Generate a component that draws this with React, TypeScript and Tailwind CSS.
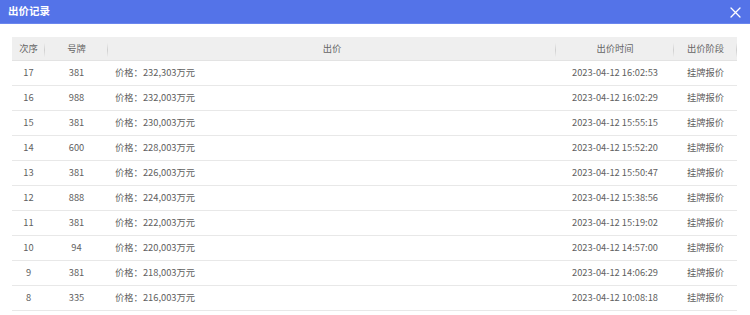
import React from "react";

const rows = [
  ["17", "381", "232,303", "2023-04-12 16:02:53"],
  ["16", "988", "232,003", "2023-04-12 16:02:29"],
  ["15", "381", "230,003", "2023-04-12 15:55:15"],
  ["14", "600", "228,003", "2023-04-12 15:52:20"],
  ["13", "381", "226,003", "2023-04-12 15:50:47"],
  ["12", "888", "224,003", "2023-04-12 15:38:56"],
  ["11", "381", "222,003", "2023-04-12 15:19:02"],
  ["10", "94", "220,003", "2023-04-12 14:57:00"],
  ["9", "381", "218,003", "2023-04-12 14:06:29"],
  ["8", "335", "216,003", "2023-04-12 10:08:18"],
];

const cols = "grid grid-cols-[33px_63px_448px_118px_63px]";

function Sep() {
  return <span className="absolute right-0 top-[6px] h-[14px] w-px bg-gradient-to-b from-[#eeeeee] via-[#cfcfcf] to-[#eeeeee]" />;
}

export default function App() {
  return (
    <div
      className="w-[750px] h-[315px] bg-white overflow-hidden text-[#606060]"
      style={{ fontFamily: '"Noto Sans CJK SC", "Noto Sans", sans-serif' }}
    >
      <div className="h-[24px] bg-[#5473e8] border-b border-[#6a86ee] flex items-center justify-between pl-[8px] pr-[9px]">
        <span className="text-white text-[10.5px] font-bold leading-none">出价记录</span>
        <svg width="11" height="11" viewBox="0 0 11 11" className="mt-[1px]">
          <path d="M1 1L10 10M10 1L1 10" stroke="white" strokeWidth="1.3" strokeLinecap="round" />
        </svg>
      </div>
      <div className="ml-[12px] mt-[13px] w-[725px] text-[9.3px] leading-none">
        <div className={`${cols} h-[24px] bg-[#efefef] border-b border-[#e3e3e3] items-center text-[#666]`}>
          <div className="relative h-full flex items-center justify-center">次序<Sep /></div>
          <div className="relative h-full flex items-center justify-center">号牌<Sep /></div>
          <div className="relative h-full flex items-center justify-center">出价<Sep /></div>
          <div className="relative h-full flex items-center justify-center">出价时间<Sep /></div>
          <div className="relative h-full flex items-center justify-center">出价阶段<Sep /></div>
        </div>
        {rows.map((r) => (
          <div key={r[0]} className={`${cols} h-[25px] border-b border-[#e8e8e8] items-center`}>
            <div className="text-center">{r[0]}</div>
            <div className="text-center">{r[1]}</div>
            <div className="pl-[7px]">价格：{r[2]}万元</div>
            <div className="text-center">{r[3]}</div>
            <div className="text-center">挂牌报价</div>
          </div>
        ))}
      </div>
    </div>
  );
}
